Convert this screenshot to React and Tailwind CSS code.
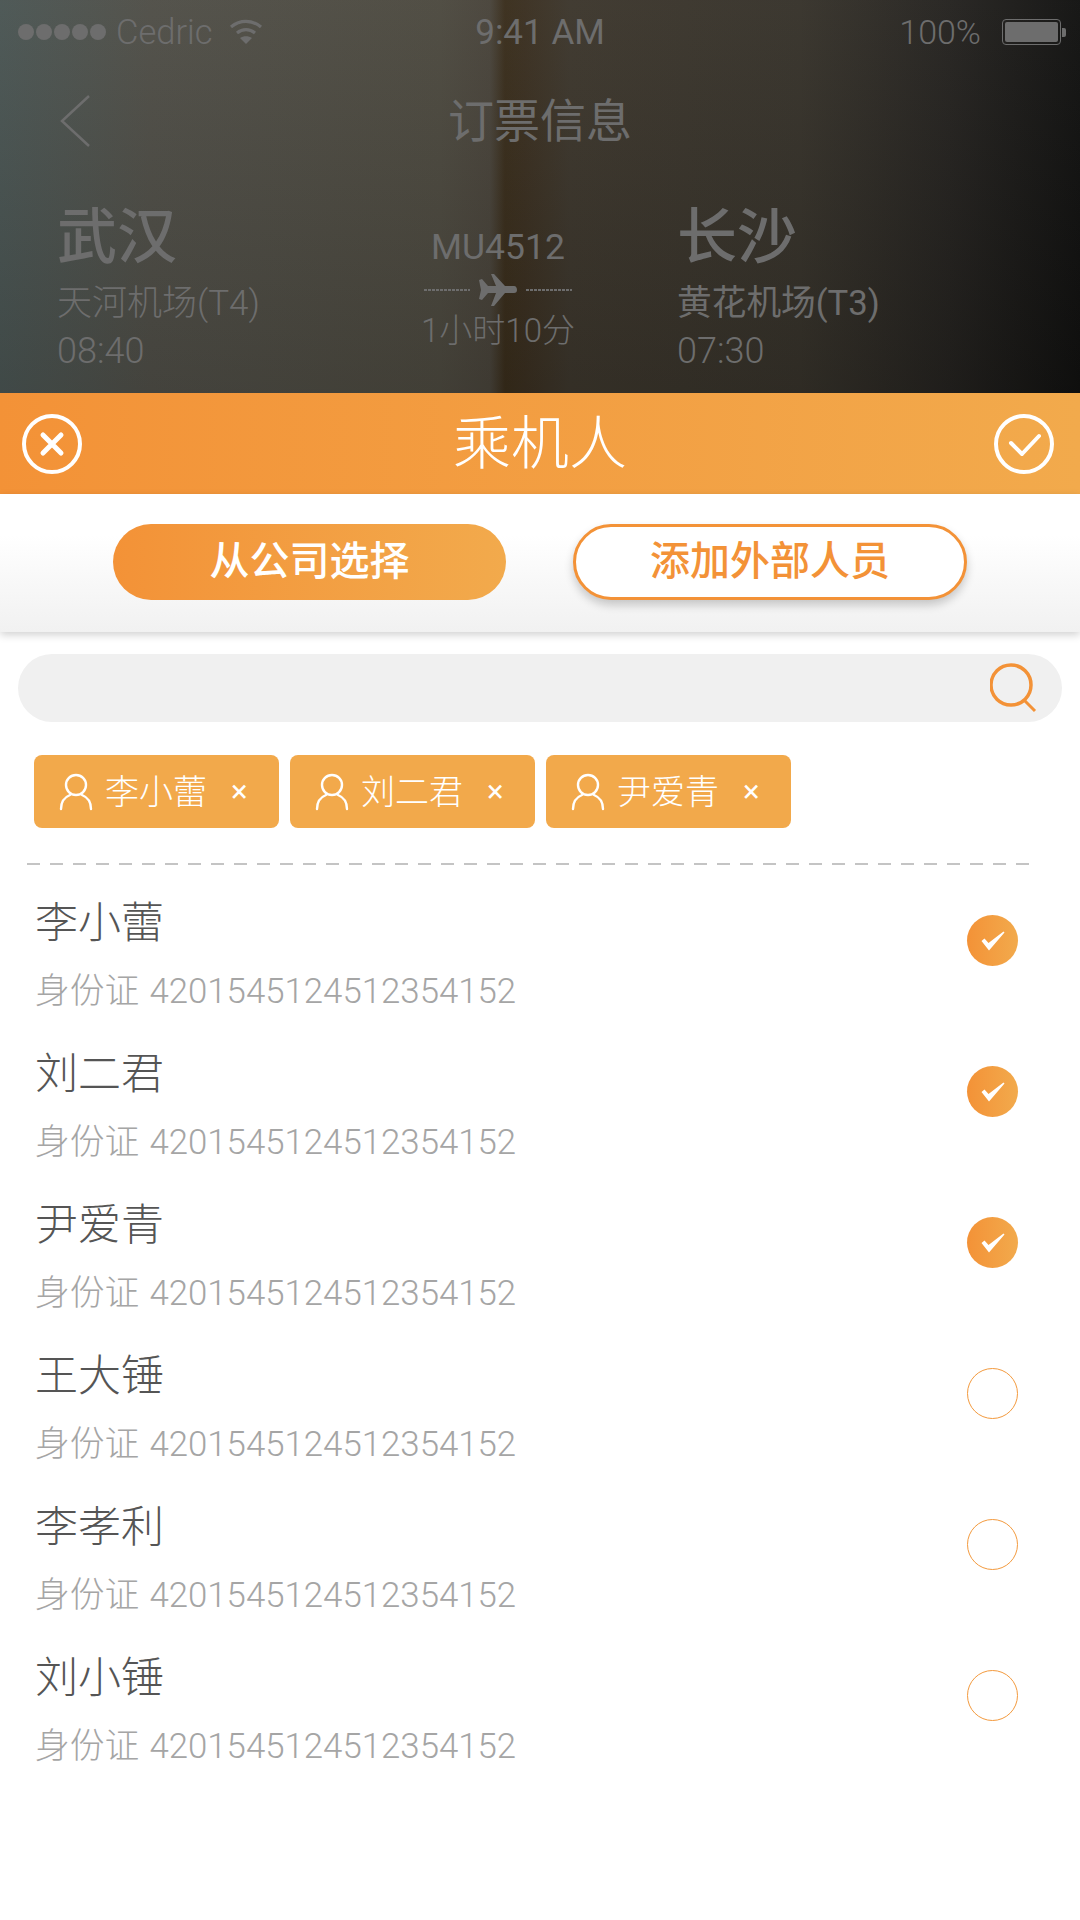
import { useState } from "react";

const passengers = [
  { name: "李小蕾", checked: true },
  { name: "刘二君", checked: true },
  { name: "尹爱青", checked: true },
  { name: "王大锤", checked: false },
  { name: "李孝利", checked: false },
  { name: "刘小锤", checked: false },
];

const ID_NO = "4201545124512354152";

function UserIcon() {
  return (
    <svg width="34" height="38" viewBox="0 0 34 38" fill="none" stroke="#fff" strokeWidth="2.4" strokeLinecap="round">
      <circle cx="17" cy="12" r="10" />
      <path d="M2 36c0-7 4-12 9-14M32 36c0-7-4-12-9-14" />
    </svg>
  );
}

function Chip({ name }) {
  return (
    <div className="flex h-[73px] w-[245px] items-center rounded-[8px] bg-[#f2a94b] pl-[25px] text-white">
      <UserIcon />
      <span className="ml-[12px] w-[102px] text-[34px] font-light leading-none">{name}</span>
      <span className="ml-[24px] text-[31px] font-normal leading-none">×</span>
    </div>
  );
}

function CheckDot({ checked }) {
  if (!checked) {
    return <div className="mt-[21px] h-[51px] w-[51px] rounded-full border border-[#f39a3e]" />;
  }
  return (
    <div className="mt-[21px] flex h-[51px] w-[51px] items-center justify-center rounded-full bg-gradient-to-r from-[#f39237] to-[#f2aa4c]">
      <svg width="24" height="20" viewBox="0 0 24 20" fill="#fff">
        <path d="M0.500 10l3-2.500 4 4.500L22.500 0.500 23.500 1.500 8 19.500z" />
      </svg>
    </div>
  );
}

function Row({ name, checked }) {
  return (
    <div className="flex h-[151px] items-start justify-between pl-[35px] pr-[62px] pt-[24px]">
      <div>
        <div className="flex h-[58px] items-center text-[43px] font-light leading-none text-[#555]">{name}</div>
        <div className="mt-[19px] flex h-[40px] items-center gap-[10px] text-[34.800px] font-light leading-none text-[#a5a5a5]">
          <span>身份证</span>
          <span>{ID_NO}</span>
        </div>
      </div>
      <CheckDot checked={checked} />
    </div>
  );
}

function StatusBar() {
  return (
    <div className="grid h-[62px] grid-cols-3 items-center text-[#6d6d6d]">
      <div className="flex items-center pl-[18px]">
        <div className="flex gap-[2px]">
          <span className="h-[16px] w-[16px] rounded-full bg-[#6d6d6d]" />
          <span className="h-[16px] w-[16px] rounded-full bg-[#6d6d6d]" />
          <span className="h-[16px] w-[16px] rounded-full bg-[#6d6d6d]" />
          <span className="h-[16px] w-[16px] rounded-full bg-[#6d6d6d]" />
          <span className="h-[16px] w-[16px] rounded-full bg-[#6d6d6d]" />
        </div>
        <span className="ml-[10px] whitespace-nowrap text-[34.500px] font-light leading-none">Cedric</span>
        <svg className="ml-[16px]" width="34" height="26" viewBox="0 0 34 26" fill="none" stroke="#6d6d6d" strokeWidth="3.200">
          <path d="M2 8c9-7.500 21-7.500 30 0" />
          <path d="M8 14c5.500-4.500 12.500-4.500 18 0" />
          <path d="M17 25l-6-6c3.500-2.500 8.500-2.500 12 0z" fill="#6d6d6d" stroke="none" />
        </svg>
      </div>
      <div className="whitespace-nowrap text-center text-[35px] font-normal leading-none">9:41 AM</div>
      <div className="flex items-center justify-end pr-[14px]">
        <span className="text-[34px] font-light leading-none">100%</span>
        <div className="ml-[21px] h-[26px] w-[59px] rounded-[4px] border border-[#6d6d6d] p-[2px]">
          <div className="h-full w-full rounded-[2px] bg-[#6d6d6d]" />
        </div>
        <div className="ml-[1px] h-[9px] w-[4px] rounded-r-[2px] bg-[#6d6d6d]" />
      </div>
    </div>
  );
}

function FlightDash() {
  return (
    <span className="h-[2px] w-[46px] bg-[repeating-linear-gradient(90deg,#6d6d6d_0px,#6d6d6d_3px,transparent_3px,transparent_4px)]" />
  );
}

function TicketBackdrop() {
  return (
    <div className="h-[393px] overflow-hidden bg-[linear-gradient(180deg,rgba(255,255,255,0.03),rgba(0,0,0,0.14)),linear-gradient(90deg,#4a5553_0px,#4f4e47_150px,#4c493f_440px,#48433a_490px,#392d1b_505px,#3a2f20_525px,#3c362c_570px,#36322a_800px,#24221f_950px,#111110_1080px)] pt-[1px] text-[#6d6d6d]">
      <StatusBar />
      <div className="relative flex h-[115px] items-center justify-center">
        <svg className="absolute left-[58px] top-[30px]" width="34" height="56" viewBox="0 0 34 56" fill="none" stroke="#6d6d6d" strokeWidth="2.500">
          <path d="M31 3L4 28l27 25" />
        </svg>
        <span className="text-[46px] font-normal leading-none">订票信息</span>
      </div>
      <div className="mt-[29px] flex pl-[57px]">
        <div className="w-[351px]">
          <div className="flex h-[62px] items-center text-[60px] font-medium leading-none">武汉</div>
          <div className="mt-[14px] flex h-[40px] items-center whitespace-nowrap text-[35px] font-light leading-none">天河机场(T4)</div>
          <div className="mt-[8px] flex h-[40px] items-center text-[36px] font-light leading-none">08:40</div>
        </div>
        <div className="w-[180px] pt-[21px] text-center">
          <div className="flex h-[40px] items-center justify-center text-[35.500px] font-normal leading-none">MU4512</div>
          <div className="mt-[6px] flex h-[32px] items-center justify-center gap-[8px]">
            <FlightDash />
            <svg width="40" height="32" viewBox="0 0 38 32" fill="#6d6d6d">
              <path d="M0 6l3-1 6 7h8L12 0h3l11 12h9c2 0 3 2 3 4s-1 3-3 3h-9L15 32h-3l5-13H9l-6 7-3-1 2-9z" />
            </svg>
            <FlightDash />
          </div>
          <div className="mt-[4px] flex h-[40px] items-center justify-center whitespace-nowrap text-[33px] font-light leading-none">1小时10分</div>
        </div>
        <div className="ml-[89px]">
          <div className="flex h-[62px] items-center text-[60px] font-medium leading-none">长沙</div>
          <div className="mt-[14px] flex h-[40px] items-center whitespace-nowrap text-[34.700px] font-normal leading-none">黄花机场(T3)</div>
          <div className="mt-[8px] flex h-[40px] items-center text-[36px] font-light leading-none">07:30</div>
        </div>
      </div>
    </div>
  );
}

export default function App() {
  const [query, setQuery] = useState("");

  return (
    <div className="min-h-[1920px] w-[1080px] bg-white font-[Roboto,'Noto_Sans_CJK_SC',sans-serif]">
      <TicketBackdrop />

      {/* Sheet header */}
      <div className="grid h-[101px] grid-cols-[1fr_auto_1fr] items-center bg-gradient-to-r from-[#f39237] to-[#f2aa4c] pl-[22px] pr-[26px] text-white">
        <svg width="60" height="60" viewBox="0 0 60 60" fill="none" stroke="#fff" strokeWidth="4" strokeLinecap="round">
          <circle cx="30" cy="30" r="28" />
          <path d="M21 21l18 18M39 21L21 39" strokeWidth="5" />
        </svg>
        <span className="ml-[4px] text-[58px] font-light leading-none">乘机人</span>
        <svg className="justify-self-end" width="60" height="60" viewBox="0 0 60 60" fill="none" stroke="#fff" strokeWidth="4" strokeLinecap="round">
          <circle cx="30" cy="30" r="28" />
          <path d="M17 29l11 11 17-18" strokeLinejoin="round" />
        </svg>
      </div>

      {/* Source tabs */}
      <div className="flex h-[138px] justify-center gap-[67px] bg-gradient-to-b from-white from-30% to-[#f1f1f1] pt-[30px] shadow-[0_3px_8px_rgba(0,0,0,0.18)]">
        <button className="h-[76px] w-[393px] rounded-full bg-gradient-to-r from-[#f39237] to-[#f2aa4c] text-[40px] font-medium leading-none text-white">
          从公司选择
        </button>
        <button className="h-[76px] w-[394px] rounded-full border-[3px] border-[#f39237] bg-white text-[40px] font-medium leading-none text-[#f39237] shadow-[0_5px_10px_rgba(0,0,0,0.2)]">
          添加外部人员
        </button>
      </div>

      {/* Search */}
      <div className="mx-[18px] mt-[22px] flex h-[68px] items-center rounded-full bg-[#f0f0f0] pl-[30px] pr-[24px]">
        <input
          value={query}
          onChange={(e) => setQuery(e.target.value)}
          className="min-w-0 flex-1 bg-transparent text-[32px] outline-none"
        />
        <svg width="48" height="50" viewBox="0 0 48 50" fill="none" stroke="#f39237" strokeWidth="3.500">
          <circle cx="21" cy="22" r="20" />
          <path d="M34 37l11 11" strokeWidth="3" />
        </svg>
      </div>

      {/* Selected chips */}
      <div className="mt-[33px] flex gap-[11px] pl-[34px]">
        <Chip name="李小蕾" />
        <Chip name="刘二君" />
        <Chip name="尹爱青" />
      </div>

      <div className="ml-[27px] mr-[49px] mt-[35px] h-[2px] bg-[repeating-linear-gradient(90deg,#c4c4c4_0px,#c4c4c4_13px,transparent_13px,transparent_23px)]" />

      <div className="mt-[5px]">
        {passengers.map((p) => (
          <Row key={p.name} name={p.name} checked={p.checked} />
        ))}
      </div>
    </div>
  );
}
